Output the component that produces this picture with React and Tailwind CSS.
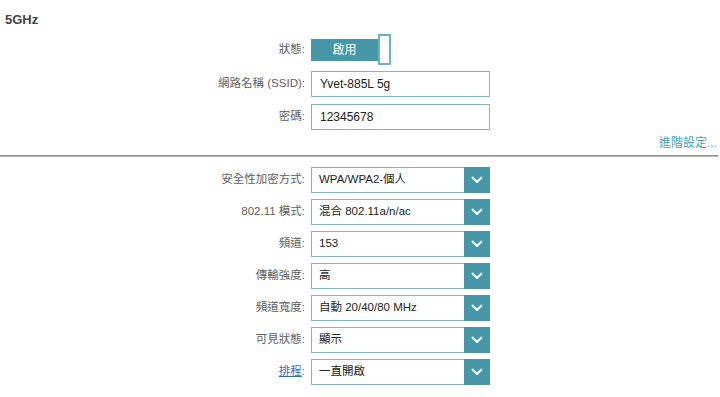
import React from "react";

const FONT = { fontFamily: '"Liberation Sans", Arial, "Noto Sans CJK TC", sans-serif' };

function Chevron() {
  return (
    <svg width="12" height="8" viewBox="0 0 12 8" fill="none">
      <path d="M1.5 1.5 L6 6 L10.5 1.5" stroke="white" strokeWidth="2" strokeLinecap="round" strokeLinejoin="round" />
    </svg>
  );
}

function Row({ label, children, className = "h-[26px]", link = false }) {
  return (
    <div className={`flex items-center ${className}`}>
      <div className="w-[306px] pr-[1px] text-right text-[11.5px] text-[#5e5e5e]">
        {link ? (
          <><span className="text-[#2b6fc0] underline">{label}</span>:</>
        ) : (
          <>{label}:</>
        )}
      </div>
      <div className="ml-[5px] w-[179px] h-full">{children}</div>
    </div>
  );
}

function Input({ value }) {
  return (
    <div className="h-full w-full border border-[#7db7c4] bg-white flex items-center pl-[8px] text-[12px] text-[#222]">
      {value}
    </div>
  );
}

function Select({ value }) {
  return (
    <div className="h-full w-full border border-[#7db7c4] bg-white flex items-stretch">
      <div className="flex-1 flex items-center pl-[7px] text-[11.5px] text-[#222]">{value}</div>
      <div className="w-[26px] -my-px -mr-px bg-[#4597a8] flex items-center justify-center">
        <Chevron />
      </div>
    </div>
  );
}

export default function App() {
  return (
    <div className="w-[720px] h-[397px] bg-white overflow-hidden" style={FONT}>
      <div className="pt-[12px] pl-[5px] text-[13px] font-bold text-[#444] leading-[16px]">5GHz</div>
      <div className="mt-[6px]">
        <Row label="狀態" className="h-[31px]">
          <div className="flex items-center h-full">
            <div className="w-[67px] h-[22px] bg-[#4597a8] text-white text-[12px] flex items-center justify-center">啟用</div>
            <div className="w-[13px] h-[31px] border-2 border-[#6fb0bf] bg-white"></div>
          </div>
        </Row>
        <div className="mt-[6px]">
          <Row label="網路名稱 (SSID)"><Input value="Yvet-885L 5g" /></Row>
        </div>
        <div className="mt-[7px]">
          <Row label="密碼"><Input value="12345678" /></Row>
        </div>
      </div>
      <div className="mt-[6px] pr-[3px] text-right text-[12px] leading-[14px] text-[#4b9fb5]">進階設定...</div>
      <div className="mt-[5px] w-[718px] h-[2px] bg-[#8c8c8c] border-b border-[#b5b5b5]"></div>
      <div className="mt-[10px] flex flex-col gap-[6px]">
        <Row label="安全性加密方式"><Select value="WPA/WPA2-個人" /></Row>
        <Row label="802.11 模式"><Select value="混合 802.11a/n/ac" /></Row>
        <Row label="頻道"><Select value="153" /></Row>
        <Row label="傳輸強度"><Select value="高" /></Row>
        <Row label="頻道寬度"><Select value="自動 20/40/80 MHz" /></Row>
        <Row label="可見狀態"><Select value="顯示" /></Row>
        <Row label="排程" link><Select value="一直開啟" /></Row>
      </div>
    </div>
  );
}
